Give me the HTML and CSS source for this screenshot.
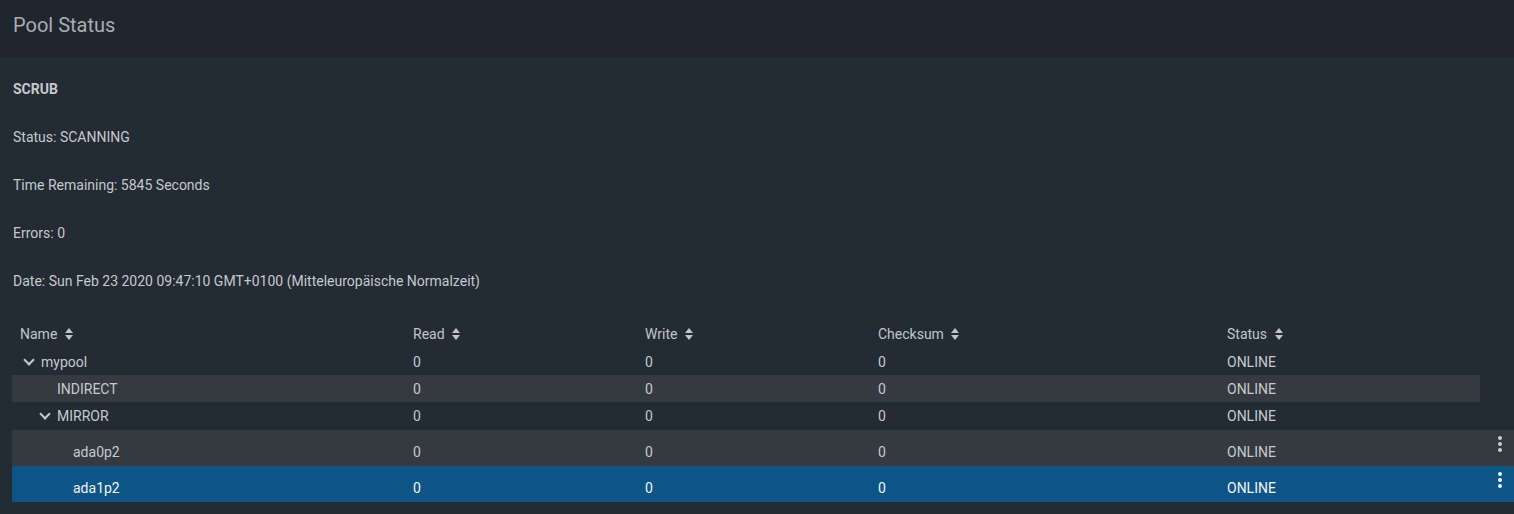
FILE: index.html
```html
<!DOCTYPE html>
<html lang="en">

<head>
    <meta charset="UTF-8">
    <title>Pool Status</title>
    <link rel="stylesheet" href="styles.css">
</head>

<body>
    <header class="page-header">
        <h1>Pool Status</h1>
    </header>

    <main class="content">
        <section class="scrub">
            <p class="scrub-title">SCRUB</p>
            <p>Status: SCANNING</p>
            <p>Time Remaining: 5845 Seconds</p>
            <p>Errors: 0</p>
            <p>Date: Sun Feb 23 2020 09:47:10 GMT+0100 (Mitteleuropäische Normalzeit)</p>
        </section>

        <div class="tree-table">
            <div class="row head">
                <div class="cell">Name <span class="sort"></span></div>
                <div class="cell">Read <span class="sort"></span></div>
                <div class="cell">Write <span class="sort"></span></div>
                <div class="cell">Checksum <span class="sort"></span></div>
                <div class="cell">Status <span class="sort"></span></div>
            </div>

            <div class="row">
                <div class="cell name lvl0"><span class="toggle open"></span>mypool</div>
                <div class="cell">0</div>
                <div class="cell">0</div>
                <div class="cell">0</div>
                <div class="cell">ONLINE</div>
            </div>
            <div class="row striped">
                <div class="cell name lvl1"><span class="toggle"></span>INDIRECT</div>
                <div class="cell">0</div>
                <div class="cell">0</div>
                <div class="cell">0</div>
                <div class="cell">ONLINE</div>
            </div>
            <div class="row">
                <div class="cell name lvl1"><span class="toggle open"></span>MIRROR</div>
                <div class="cell">0</div>
                <div class="cell">0</div>
                <div class="cell">0</div>
                <div class="cell">ONLINE</div>
            </div>
            <div class="row disk striped">
                <div class="cell name lvl2"><span class="toggle"></span>ada0p2</div>
                <div class="cell">0</div>
                <div class="cell">0</div>
                <div class="cell">0</div>
                <div class="cell">ONLINE</div>
                <div class="cell actions"><button class="kebab"><i></i><i></i><i></i></button></div>
            </div>
            <div class="row disk selected">
                <div class="cell name lvl2"><span class="toggle"></span>ada1p2</div>
                <div class="cell">0</div>
                <div class="cell">0</div>
                <div class="cell">0</div>
                <div class="cell">ONLINE</div>
                <div class="cell actions"><button class="kebab"><i></i><i></i><i></i></button></div>
            </div>
        </div>
    </main>
</body>

</html>
```

FILE: styles.css
```css
body {
    margin: 0;
    background: #232b34;
    color: #c6c9cc;
    font-family: Roboto, "Liberation Sans", sans-serif;
    font-size: 14px;
}

.page-header {
    background: #1f262e;
    height: 57px;
    padding: 0 13px;
    display: flex;
    align-items: center;
    box-sizing: border-box;
}

.page-header h1 {
    margin: 0 0 7px;
    font-size: 20px;
    font-weight: 400;
    color: #a9adb1;
}

.content {
    padding: 22px 0 0 12px;
}

.scrub {
    padding-left: 1px;
}

.scrub p {
    margin: 0 0 28px;
    line-height: 20px;
}

.scrub .scrub-title {
    font-weight: 700;
}

.tree-table {
    margin-top: 30px;
}

.row {
    display: grid;
    grid-template-columns: 393px 232px 233px 349px 261px;
    height: 27px;
    box-sizing: border-box;
    align-items: center;
    margin-right: 34px;
}

.row.head {
    padding-bottom: 2px;
}

.row.disk {
    grid-template-columns: 393px 232px 233px 349px 261px 1fr;
    height: 36px;
    margin-right: 0;
    padding-top: 8px;
}

.row:not(.disk) + .row.disk {
    margin-top: 1px;
}

.row.striped {
    background: #343a40;
}

.row.selected {
    background: #0e5587;
    color: #f0f3f6;
}

.cell {
    padding-left: 8px;
    white-space: nowrap;
}

.head .cell {
    color: #c2c5c8;
}

.name {
    display: flex;
    align-items: center;
}

.lvl1 { padding-left: 24px; }
.lvl2 { padding-left: 40px; }

.toggle {
    width: 21px;
    height: 14px;
    position: relative;
    flex: none;
}

/* chevron for expanded nodes */
.toggle.open::before {
    content: "";
    position: absolute;
    left: 5px;
    top: 1px;
    width: 6px;
    height: 6px;
    border-right: 2px solid #c6c9cc;
    border-bottom: 2px solid #c6c9cc;
    transform: rotate(45deg);
}

/* up/down sort arrows */
.sort {
    display: inline-block;
    position: relative;
    width: 9px;
    height: 12px;
    margin-left: 4px;
    vertical-align: -1px;
}

.sort::before,
.sort::after {
    content: "";
    position: absolute;
    left: 0;
    border-left: 4.5px solid transparent;
    border-right: 4.5px solid transparent;
}

.sort::before {
    top: 0;
    border-bottom: 5px solid #c2c5c8;
}

.sort::after {
    bottom: 0;
    border-top: 5px solid #c2c5c8;
}

.actions {
    display: flex;
    justify-content: flex-end;
    padding-right: 12px;
}

.kebab {
    background: none;
    border: none;
    padding: 0;
    display: flex;
    flex-direction: column;
    gap: 2px;
    margin-top: -16px;
    cursor: pointer;
}

.kebab i {
    width: 4px;
    height: 4px;
    border-radius: 50%;
    background: #c9ccd0;
}

.selected .kebab i {
    background: #f0f3f6;
}
```
